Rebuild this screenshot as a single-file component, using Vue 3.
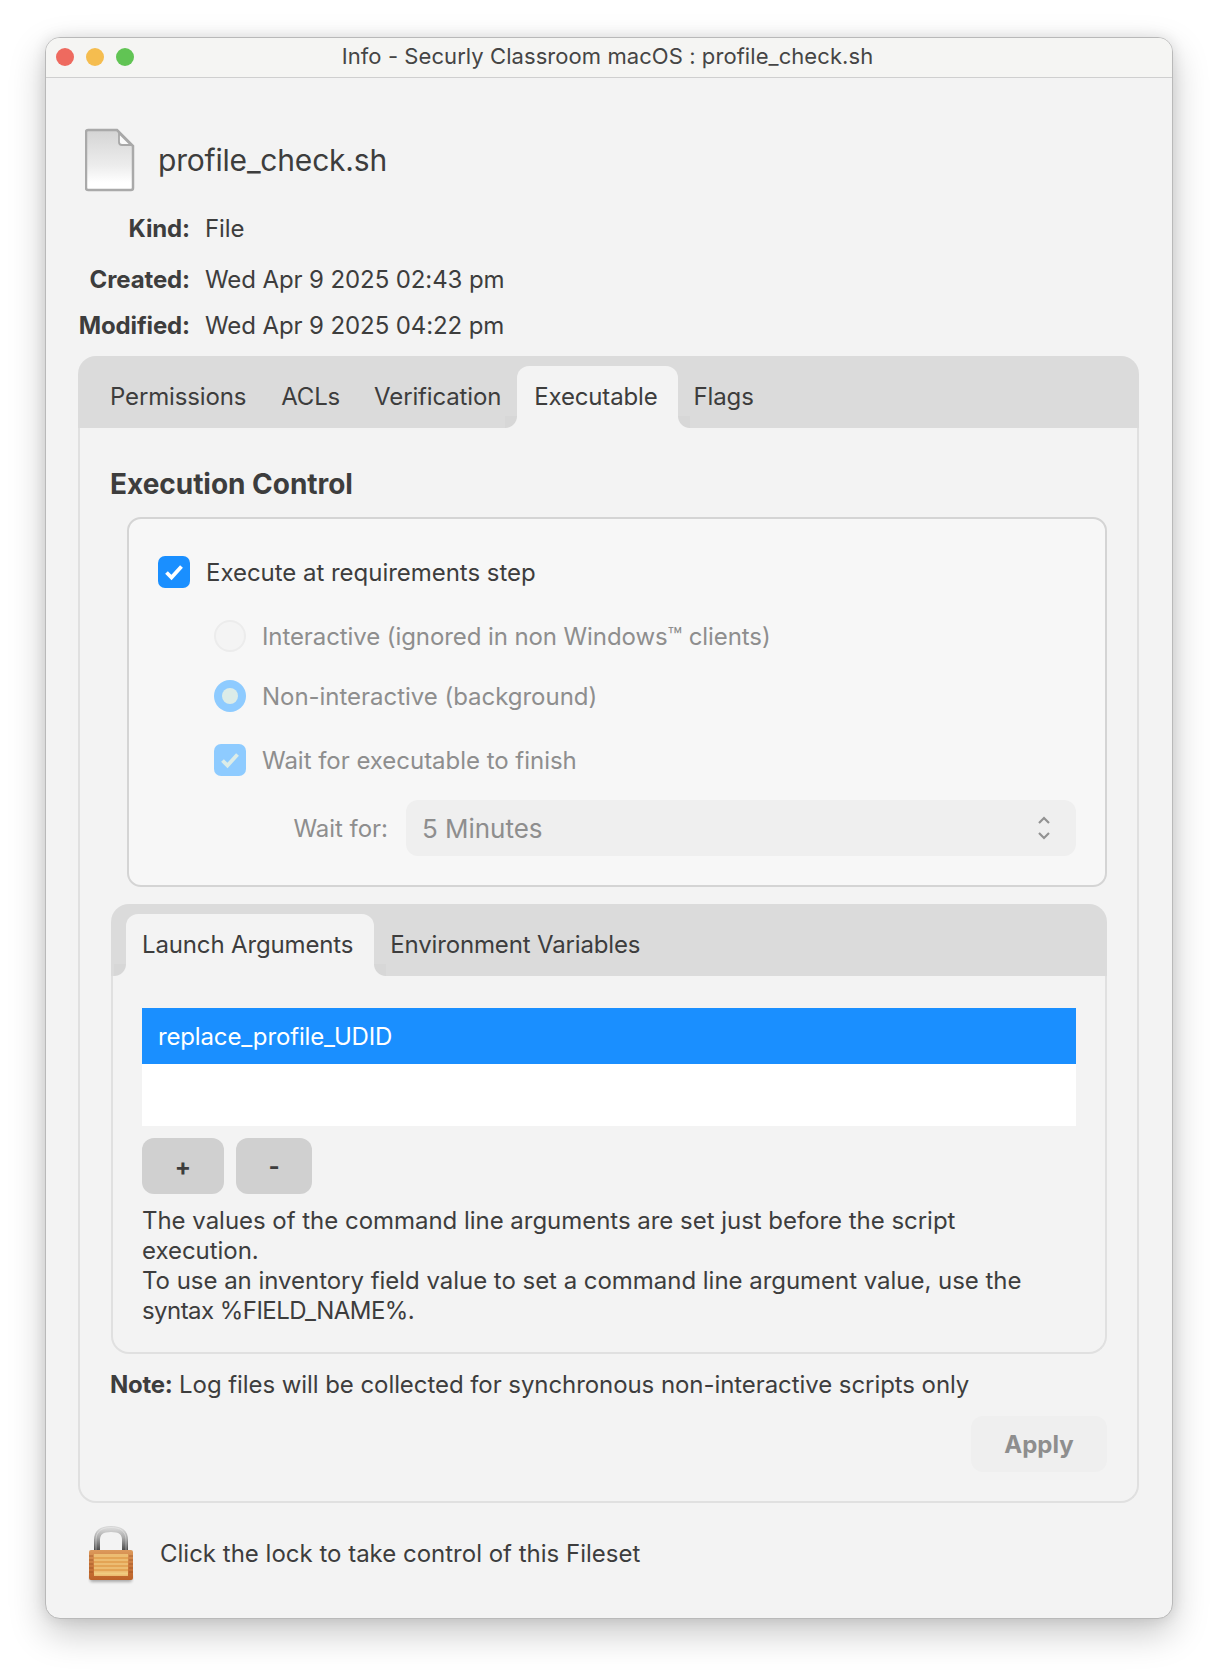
<script setup>
const info = [
  { label: 'Kind:', value: 'File' },
  { label: 'Created:', value: 'Wed Apr 9 2025 02:43 pm' },
  { label: 'Modified:', value: 'Wed Apr 9 2025 04:22 pm' },
]
const tabs = ['Permissions', 'ACLs', 'Verification', 'Executable', 'Flags']
</script>

<template>
  <div class="page">
    <div class="window">
      <div class="titlebar">
        <div class="lights">
          <span class="light red"></span>
          <span class="light yellow"></span>
          <span class="light green"></span>
        </div>
        <div class="title">Info - Securly Classroom macOS : profile_check.sh</div>
      </div>

      <div class="header">
        <svg class="file-icon" width="50" height="64" viewBox="0 0 50 64">
          <defs>
            <linearGradient id="paper" x1="0" y1="0" x2="0" y2="1">
              <stop offset="0" stop-color="#d4d4d4" />
              <stop offset="0.6" stop-color="#ededed" />
              <stop offset="0.88" stop-color="#ffffff" />
            </linearGradient>
          </defs>
          <path d="M3 2H32L48 18V60a2 2 0 0 1-2 2H3a2 2 0 0 1-2-2V4a2 2 0 0 1 2-2Z" fill="url(#paper)" stroke="#a9a9a9" stroke-width="2.500" />
          <path d="M34 5V14a3 3 0 0 0 3 3H46Z" fill="#fafafa" stroke="#a8a8a8" stroke-width="1.800" />
        </svg>
        <div class="filename">profile_check.sh</div>
      </div>

      <div class="info">
        <div v-for="row in info" :key="row.label" class="info-row">
          <span class="info-label">{{ row.label }}</span>
          <span class="info-value">{{ row.value }}</span>
        </div>
      </div>

      <div class="panel">
        <div class="tabbar">
          <div v-for="t in tabs" :key="t" class="tab" :class="[{ active: t === 'Executable' }, 'tab-' + t.toLowerCase()]">{{ t }}</div>
        </div>
        <div class="panel-body">
          <h2 class="heading">Execution Control</h2>

          <div class="group">
            <div class="row">
              <span class="check">
                <svg width="32" height="32" viewBox="0 0 32 32"><path d="M8.500 16.500L13.500 21.500L23.500 10.500" fill="none" stroke="#fff" stroke-width="3.800" /></svg>
              </span>
              <span class="row-text">Execute at requirements step</span>
            </div>
            <div class="row indented dim r2">
              <span class="radio"></span>
              <span class="row-text tight">Interactive (ignored in non Windows™ clients)</span>
            </div>
            <div class="row indented dim r3">
              <span class="radio on"><span class="dot"></span></span>
              <span class="row-text">Non-interactive (background)</span>
            </div>
            <div class="row indented dim r4">
              <span class="check light-check">
                <svg width="32" height="32" viewBox="0 0 32 32"><path d="M8.500 16.500L13.500 21.500L23.500 10.500" fill="none" stroke="#dcece8" stroke-width="3.800" /></svg>
              </span>
              <span class="row-text">Wait for executable to finish</span>
            </div>
            <div class="wait-row">
              <span class="wait-label">Wait for:</span>
              <div class="select">
                <span class="select-value">5 Minutes</span>
                <svg width="14" height="28" viewBox="0 0 14 28">
                  <path d="M2 9L7 4L12 9M2 19L7 24L12 19" fill="none" stroke="#929292" stroke-width="2.200" />
                </svg>
              </div>
            </div>
          </div>

          <div class="subpanel">
            <div class="tabbar subbar">
              <div class="tab active launch">Launch Arguments</div>
              <div class="tab env">Environment Variables</div>
            </div>
            <div class="sub-body">
              <div class="list">
                <div class="list-selected">replace_profile_UDID</div>
              </div>
              <div class="buttons">
                <button class="btn plus">+</button>
                <button class="btn minus">-</button>
              </div>
              <div class="help">
                <div>The values of the command line arguments are set just before the script execution.</div>
                <div>To use an inventory field value to set a command line argument value, use the</div>
                <div class="last-line">syntax %FIELD_NAME%.</div>
              </div>
            </div>
          </div>

          <div class="note"><b>Note:</b> Log files will be collected for synchronous non-interactive scripts only</div>
          <div class="apply-row"><button class="apply">Apply</button></div>
        </div>
      </div>

      <div class="footer">
        <svg class="lock" width="46" height="60" viewBox="0 0 46 60">
          <defs>
            <linearGradient id="shackle" x1="0" y1="0" x2="0" y2="1">
              <stop offset="0" stop-color="#d6d6d6" />
              <stop offset="0.4" stop-color="#a8a8a8" />
              <stop offset="1" stop-color="#444444" />
            </linearGradient>
            <linearGradient id="body" x1="0" y1="0" x2="0" y2="1">
              <stop offset="0" stop-color="#dc9a5c" />
              <stop offset="0.5" stop-color="#cc7a3e" />
              <stop offset="1" stop-color="#bc6228" />
            </linearGradient>
            <filter id="lockshadow" x="-20%" y="-60%" width="140%" height="220%">
              <feGaussianBlur stdDeviation="1.500" />
            </filter>
          </defs>
          <rect x="2" y="50" width="42" height="7" rx="2" fill="#000" opacity="0.3" filter="url(#lockshadow)" />
          <path d="M9 26V15C9 7 14 4 23 4S37 7 37 15V26" fill="none" stroke="url(#shackle)" stroke-width="6" />
          <path d="M8 26V15C8 6 14 2.500 23 2.500S38 6 38 15V26" fill="none" stroke="#f2f2f2" stroke-width="1" opacity="0.45" />
          <rect x="1" y="25" width="44" height="30" rx="2" fill="url(#body)" />
          <rect x="6" y="29" width="34" height="22" fill="#ecbc72" />
          <path d="M6 33H40M6 37H40M6 41H40M6 45H40" stroke="#e09c4c" stroke-width="1.700" />
          <path d="M6 48.500H40" stroke="#f0cc80" stroke-width="2" />
          <path d="M1 31H5M1 35H5M1 39H5M1 43H5M1 47H5M41 31H45M41 35H45M41 39H45M41 43H45M41 47H45" stroke="#8a4318" stroke-width="1" opacity="0.55" />
        </svg>
        <span class="footer-text">Click the lock to take control of this Fileset</span>
      </div>
    </div>
  </div>
</template>

<style>
html, body { background: #fff; }
</style>

<style scoped>
.page {
  padding: 37px 0 0 45px;
  height: 1672px;
  box-sizing: border-box;
  font-family: Inter, "Liberation Sans", sans-serif;
  color: #3d3d3d;
  font-size: 24px;
  letter-spacing: -0.03px;
  overflow: hidden;
}
.window {
  width: 1128px;
  height: 1582px;
  box-sizing: border-box;
  background: #f3f3f3;
  border: 1px solid #b9b9b9;
  border-radius: 15px;
  box-shadow: 0 14px 36px rgba(0, 0, 0, 0.22), 0 0 14px rgba(0, 0, 0, 0.1);
  overflow: hidden;
}
.titlebar {
  position: relative;
  height: 39px;
  background: #f5f5f3;
  border-bottom: 1px solid #cfcfcf;
  display: flex;
  align-items: center;
  justify-content: center;
}
.lights {
  position: absolute;
  left: 10px;
  top: 10px;
  display: flex;
  gap: 12px;
}
.light { width: 18px; height: 18px; border-radius: 50%; }
.red { background: #ee6a5f; }
.yellow { background: #f5bd4f; }
.green { background: #61c454; }
.title {
  font-size: 22px;
  letter-spacing: 0.07px;
  color: #454545;
  padding: 0 3px 3px 0;
}

.header {
  display: flex;
  align-items: center;
  padding: 50px 0 0 39px;
  height: 64px;
}
.file-icon { flex: none; }
.filename { font-size: 30px; letter-spacing: -0.2px; margin-left: 23px; margin-bottom: 1px; }

.info { margin-top: 22px; }
.info-row { display: flex; height: 30px; line-height: 30px; }
.info-row:nth-child(2) { margin-top: 21px; }
.info-row:nth-child(3) { margin-top: 16px; }
.info-label { width: 144px; text-align: right; font-weight: 700; letter-spacing: -0.12px; }
.info-value { margin-left: 15px; letter-spacing: -0.1px; }

.panel {
  margin: 15px 33px 0 32px;
}
.tabbar {
  display: flex;
  height: 72px;
  box-sizing: border-box;
  padding: 10px 0 0 16px;
  background: #dbdbdb;
  border-radius: 18px 18px 0 0;
}
.tab {
  position: relative;
  padding: 0 16px;
  line-height: 62px;
  white-space: nowrap;
  letter-spacing: -0.15px;
}
.tab.active {
  background: #f3f3f3;
  border-radius: 12px 12px 0 0;
  padding: 0 20px 0 17px;
}
.tab.active::before,
.tab.active::after {
  content: "";
  position: absolute;
  bottom: 0;
  width: 12px;
  height: 12px;
}
.tab.active::before {
  left: -12px;
  background: radial-gradient(circle at 0 0, #d7d7d7 11.5px, #f3f3f3 12.5px);
}
.tab.active::after {
  right: -12px;
  background: radial-gradient(circle at 100% 0, #d7d7d7 11.5px, #f3f3f3 12.5px);
}
.tab-acls { margin-left: 3px; }
.tab-verification { margin-left: 2px; }

.panel-body {
  border: 2px solid #e0e0e0;
  border-top: 0;
  border-radius: 0 0 18px 18px;
  padding: 39px 30px 29px;
}
.heading {
  margin: 0 0 16px;
  font-size: 28px;
  line-height: 34px;
  font-weight: 700;
}
.group {
  margin-left: 17px;
  background: #f7f7f7;
  border: 2px solid #d4d4d4;
  border-radius: 14px;
  padding: 37px 29px 29px;
}
.row { display: flex; align-items: center; height: 32px; }
.indented { margin-left: 56px; }
.r2 { margin-top: 32px; }
.r3 { margin-top: 28px; }
.r4 { margin-top: 32px; }
.row-text { margin-left: 16px; }
.tight { letter-spacing: -0.09px; }
.dim { color: #8e8e8e; }
.check {
  width: 32px;
  height: 32px;
  border-radius: 7px;
  background: #1a8fff;
  flex: none;
}
.check svg { display: block; }
.light-check { background: #8ecbff; }
.radio {
  width: 32px;
  height: 32px;
  box-sizing: border-box;
  border-radius: 50%;
  background: #f4f4f4;
  border: 2px solid #ececec;
  flex: none;
  display: flex;
  align-items: center;
  justify-content: center;
}
.radio.on { background: #8ecbff; border: 0; }
.dot { width: 16px; height: 16px; border-radius: 50%; background: #dcece8; }
.wait-row {
  display: flex;
  align-items: center;
  margin-top: 24px;
}
.wait-label {
  width: 230px;
  text-align: right;
  color: #8e8e8e;
}
.select {
  margin-left: 18px;
  flex: 1;
  height: 56px;
  box-sizing: border-box;
  background: #efefef;
  border-radius: 12px;
  padding: 0 25px 0 16px;
  display: flex;
  align-items: center;
  justify-content: space-between;
  color: #8e8e8e;
}
.select-value { font-size: 26px; }

.subpanel { margin: 17px 0 0 1px; }
.subbar { padding: 10px 0 0 15px; }
.tab.launch { padding: 0 21px 0 16px; }
.env { padding-left: 16px; }
.sub-body {
  border: 2px solid #e0e0e0;
  border-top: 0;
  border-radius: 0 0 18px 18px;
  padding: 32px 29px 26px;
}
.list { background: #fff; height: 118px; }
.list-selected {
  height: 56px;
  line-height: 58px;
  background: #1a8fff;
  color: #fff;
  padding-left: 16px;
  letter-spacing: -0.15px;
}
.buttons { display: flex; gap: 12px; margin-top: 12px; }
.btn {
  height: 56px;
  border: 0;
  border-radius: 12px;
  background: #d0d0d0;
  color: #3d3d3d;
  font: 700 24px Inter, "Liberation Sans", sans-serif;
}
.plus { width: 82px; }
.minus { width: 76px; }
.help { margin-top: 12px; line-height: 30px; }
.last-line { letter-spacing: -0.55px; }
.note { margin: 16px 0 0 0; line-height: 30px; letter-spacing: -0.07px; }
.note b { font-weight: 700; letter-spacing: -0.3px; }
.apply-row { display: flex; justify-content: flex-end; margin-top: 16px; }
.apply {
  width: 136px;
  height: 56px;
  border: 0;
  border-radius: 12px;
  background: #efefef;
  color: #8e8e8e;
  font: 700 24px Inter, "Liberation Sans", sans-serif;
}
.footer {
  display: flex;
  align-items: center;
  margin-top: 22px;
  padding-left: 42px;
}
.lock { flex: none; }
.footer-text { margin-left: 26px; margin-top: -4px; letter-spacing: 0; }
</style>
